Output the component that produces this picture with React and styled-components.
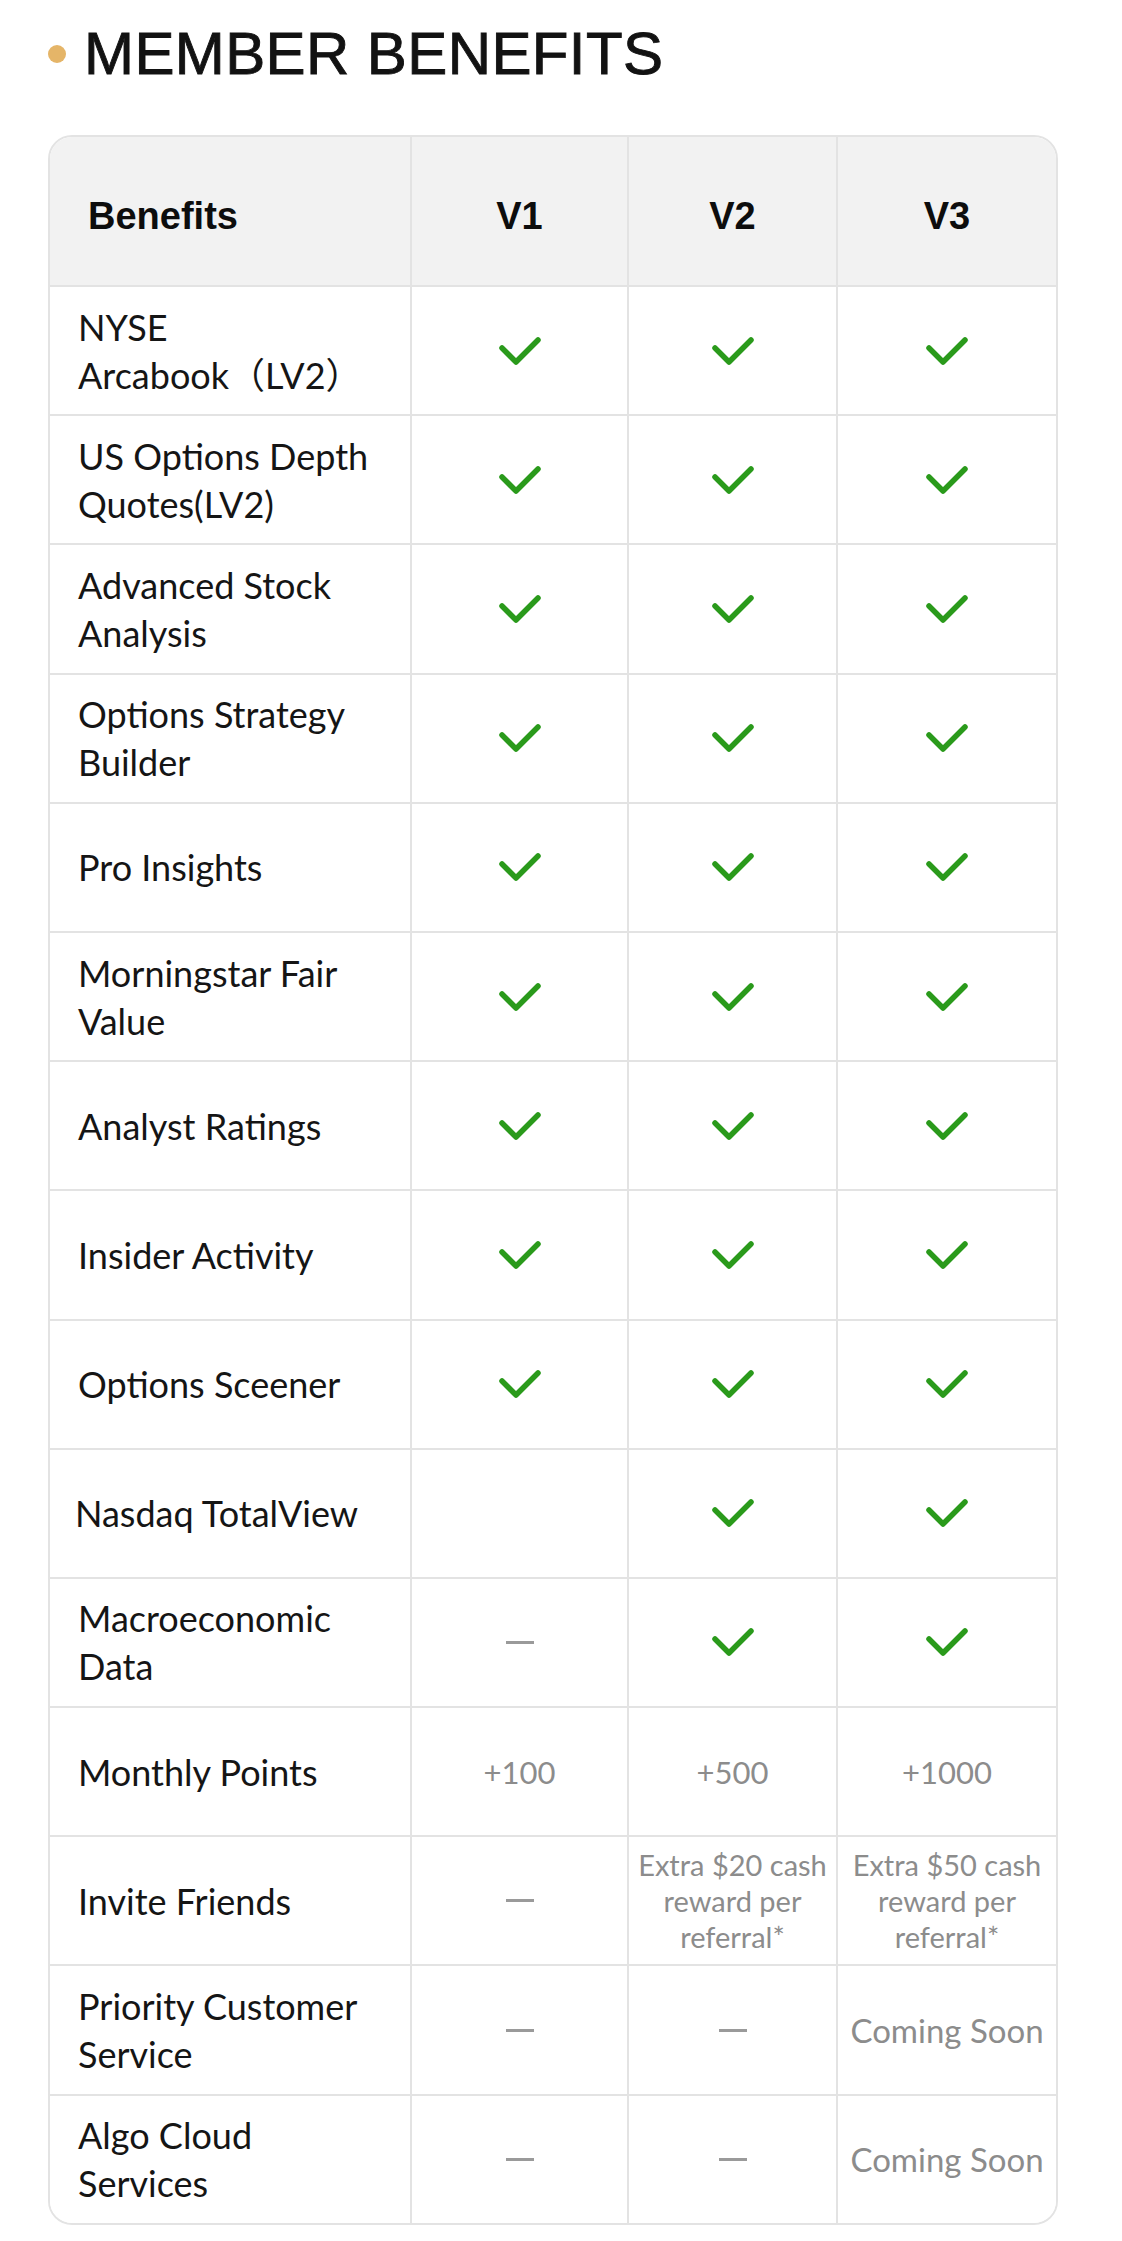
import React from "react";
import styled, { createGlobalStyle } from "styled-components";

const GlobalStyle = createGlobalStyle`
  body {
    margin: 0;
    background: #ffffff;
  }
`;

const Page = styled.div`
  padding: 24px 64px 0 48px;
`;

const Heading = styled.div`
  display: flex;
  align-items: center;
  gap: 18px;
  height: 60px;
`;

const Dot = styled.span`
  width: 18px;
  height: 18px;
  border-radius: 50%;
  background: #e5b568;
`;

const Title = styled.h1`
  margin: 0;
  font-family: "Liberation Sans", Arial, sans-serif;
  font-size: 60px;
  font-weight: 400;
  line-height: 1;
  letter-spacing: 0.4px;
  color: #121212;
  -webkit-text-stroke: 0.9px #121212;
`;

const Table = styled.div`
  margin-top: 51px;
  width: 1010px;
  box-sizing: border-box;
  border: 2px solid #e3e3e3;
  border-radius: 24px;
  overflow: hidden;
  display: flex;
  flex-direction: column;
`;

const Row = styled.div`
  display: grid;
  grid-template-columns: 362px 217px 209px 218px;
  height: ${(p) => (p.$head ? "150px" : "129.2px")};
  box-sizing: border-box;
  background: ${(p) => (p.$head ? "#f2f2f2" : "#ffffff")};
  border-bottom: 2px solid #e3e3e3;

  &:last-child {
    border-bottom: none;
    height: 127.2px;
  }
`;

const Cell = styled.div`
  display: flex;
  align-items: center;
  justify-content: center;
  box-sizing: border-box;
  border-right: 2px solid #e3e3e3;
  text-align: center;

  &:last-child {
    border-right: none;
  }
`;

const LabelCell = styled(Cell)`
  justify-content: flex-start;
  text-align: left;
  padding-left: ${(p) => p.$indent || 28}px;
  font-family: Lato, "Noto Sans CJK SC", sans-serif;
  font-size: 36px;
  line-height: 48px;
  color: #151515;
  white-space: pre-line;
`;

const HeadCell = styled(Cell)`
  font-family: "Liberation Sans", Arial, sans-serif;
  font-size: 38px;
  font-weight: 700;
  color: #0d0d0d;
  padding-top: 10px;
  justify-content: ${(p) => (p.$left ? "flex-start" : "center")};
  padding-left: ${(p) => (p.$left ? "38px" : "0")};
`;

const Muted = styled.span`
  font-family: Lato, sans-serif;
  font-size: ${(p) => (p.$note ? "29px" : p.$wide ? "33px" : "31px")};
  line-height: ${(p) => (p.$note ? "36px" : "40px")};
  color: #8c8c8c;
  white-space: pre-line;
`;

const Dash = styled.span`
  width: 28px;
  height: 3px;
  background: #9a9a9a;
`;

const Check = () => (
  <svg width="44" height="32" viewBox="0 0 44 32">
    <polyline
      points="4,13 18,27 40,5"
      fill="none"
      stroke="#2a9a1b"
      strokeWidth="5.5"
      strokeLinecap="round"
      strokeLinejoin="round"
    />
  </svg>
);

const C = "check";
const D = "dash";

const rows = [
  { label: "NYSE\nArcabook（LV2）", values: [C, C, C] },
  { label: "US Options Depth\nQuotes(LV2)", values: [C, C, C] },
  { label: "Advanced Stock\nAnalysis", values: [C, C, C] },
  { label: "Options Strategy\nBuilder", values: [C, C, C] },
  { label: "Pro Insights", values: [C, C, C] },
  { label: "Morningstar Fair\nValue", values: [C, C, C] },
  { label: "Analyst Ratings", values: [C, C, C] },
  { label: "Insider Activity", values: [C, C, C] },
  { label: "Options Sceener", values: [C, C, C] },
  { label: "Nasdaq TotalView", values: [null, C, C], indent: 25 },
  { label: "Macroeconomic\nData", values: [D, C, C] },
  { label: "Monthly Points", values: ["+100", "+500", "+1000"] },
  {
    label: "Invite Friends",
    values: [
      D,
      "Extra $20 cash\nreward per\nreferral*",
      "Extra $50 cash\nreward per\nreferral*",
    ],
  },
  { label: "Priority Customer\nService", values: [D, D, "Coming Soon"] },
  { label: "Algo Cloud\nServices", values: [D, D, "Coming Soon"] },
];

const renderValue = (v) => {
  if (v === C) return <Check />;
  if (v === D) return <Dash />;
  if (!v) return null;
  return (
    <Muted $note={v.includes("\n")} $wide={v.startsWith("Coming")}>
      {v}
    </Muted>
  );
};

const App = () => {
  return (
    <Page>
      <GlobalStyle />
      <Heading>
        <Dot />
        <Title>MEMBER BENEFITS</Title>
      </Heading>
      <Table>
        <Row $head>
          <HeadCell $left>Benefits</HeadCell>
          <HeadCell>V1</HeadCell>
          <HeadCell>V2</HeadCell>
          <HeadCell>V3</HeadCell>
        </Row>
        {rows.map((row) => (
          <Row key={row.label}>
            <LabelCell $indent={row.indent}>{row.label}</LabelCell>
            {row.values.map((v, i) => (
              <Cell key={i}>{renderValue(v)}</Cell>
            ))}
          </Row>
        ))}
      </Table>
    </Page>
  );
};

export default App;
